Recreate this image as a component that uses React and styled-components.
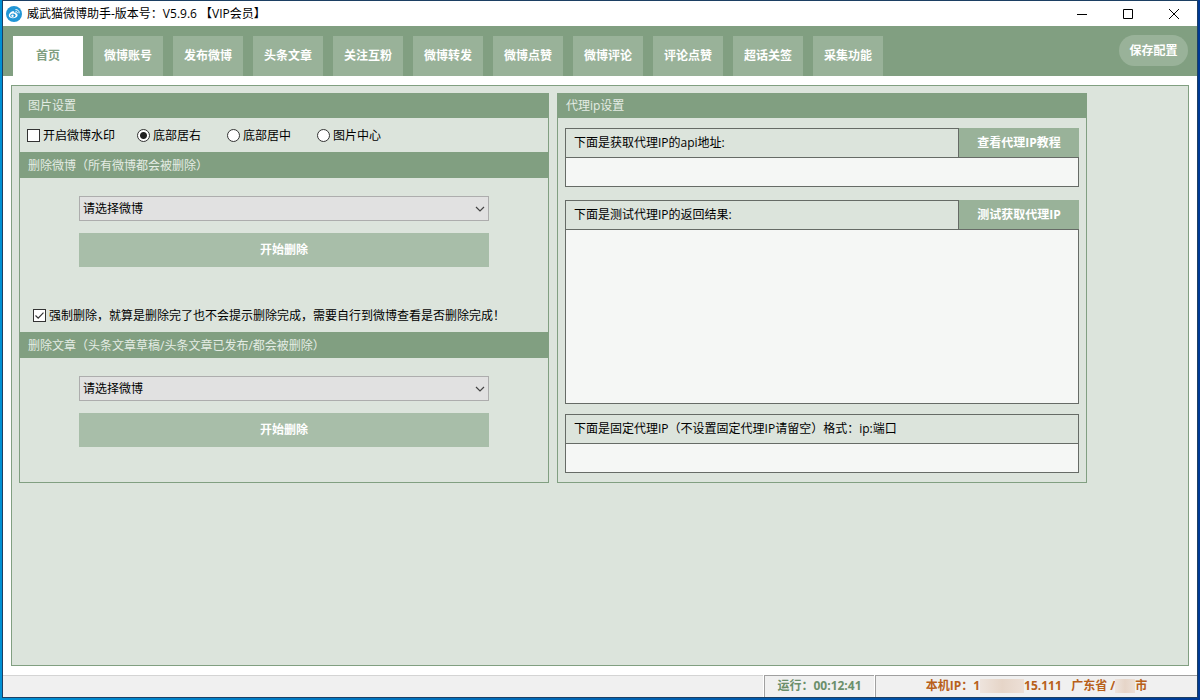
import React, {useState} from "react";
import styled, {createGlobalStyle} from "styled-components";

const tabs = ["首页", "微博账号", "发布微博", "头条文章", "关注互粉", "微博转发", "微博点赞", "微博评论", "评论点赞", "超话关签", "采集功能"];
const positions = ["底部居右", "底部居中", "图片中心"];

const Logo = () => (
    <svg width="16" height="16" viewBox="0 0 16 16" aria-hidden="true">
        <circle cx="8" cy="8" r="8" fill="#2196d6"/>
        <path d="M2.8 9.6C2.8 7.2 5.6 5.2 7.2 5.2c1 0 1.2.7 1 1.5 1.600-.6 2.600-.1 2.300 1.100 1 .3 1.300 1 1.100 1.800-.4 1.700-2.400 2.700-4.600 2.700-2.300 0-4.200-1-4.200-2.700z" fill="#fff"/>
        <ellipse cx="6.900" cy="9.500" rx="2.700" ry="1.900" fill="#2196d6"/>
        <circle cx="6.500" cy="9.700" r="1.200" fill="#fff"/>
        <path d="M9.400 3.700c2.400-.4 4.100 1.300 3.700 3.700M9.600 5.500c1.200-.2 1.900.6 1.700 1.700" fill="none" stroke="#fff" strokeWidth="1"/>
    </svg>
);

const DeleteForm = ({name}) => (
    <FormBody>
        <SelectBox>
            <Select aria-label={name}>
                <option>请选择微博</option>
            </Select>
            <Arrow width="10" height="6" viewBox="0 0 10 6" aria-hidden="true">
                <path d="M1 1l4 4 4-4" fill="none" stroke="#444" strokeWidth="1.200"/>
            </Arrow>
        </SelectBox>
        <DeleteButton type="button">开始删除</DeleteButton>
    </FormBody>
);

export default function App() {
    const [tab, setTab] = useState(0);
    const [mark, setMark] = useState(false);
    const [position, setPosition] = useState(0);
    const [force, setForce] = useState(true);

    return (
        <>
            <GlobalStyle/>
            <Window>
                <TitleBar>
                    <Logo/>
                    <Title>威武猫微博助手-版本号：V5.9.6 【VIP会员】</Title>
                    <WindowButton type="button" aria-label="最小化">
                        <svg width="10" height="10"><path d="M0 5.500h10" stroke="#000"/></svg>
                    </WindowButton>
                    <WindowButton type="button" aria-label="最大化">
                        <svg width="10" height="10"><path d="M.5.5h9v9h-9z" fill="none" stroke="#000"/></svg>
                    </WindowButton>
                    <WindowButton type="button" aria-label="关闭">
                        <svg width="10" height="10"><path d="M0 0l10 10M10 0L0 10" stroke="#000"/></svg>
                    </WindowButton>
                </TitleBar>
                <Toolbar>
                    <TabList>
                        {tabs.map((name, idx) => (
                            <Tab key={name} type="button" $active={tab === idx} onClick={() => setTab(idx)}>{name}</Tab>
                        ))}
                    </TabList>
                    <SaveButton type="button">保存配置</SaveButton>
                </Toolbar>
                <Content>
                    <Page>
                        <Card>
                            <CardTitle $height="24px">图片设置</CardTitle>
                            <OptionRow>
                                <Option $width="110px">
                                    <Check type="checkbox" checked={mark} onChange={() => setMark(!mark)}/>
                                    开启微博水印
                                </Option>
                                {positions.map((name, idx) => (
                                    <Option key={name} $width="90px">
                                        <Radio type="radio" name="position" checked={position === idx} onChange={() => setPosition(idx)}/>
                                        {name}
                                    </Option>
                                ))}
                            </OptionRow>
                            <CardTitle $height="26px">删除微博（所有微博都会被删除）</CardTitle>
                            <DeleteForm name="删除微博"/>
                            <ForceRow>
                                <Option>
                                    <Check type="checkbox" checked={force} onChange={() => setForce(!force)}/>
                                    强制删除，就算是删除完了也不会提示删除完成，需要自行到微博查看是否删除完成！
                                </Option>
                            </ForceRow>
                            <CardTitle $height="26px">删除文章（头条文章草稿/头条文章已发布/都会被删除）</CardTitle>
                            <DeleteForm name="删除文章"/>
                        </Card>
                        <Card>
                            <CardTitle $height="24px">代理ip设置</CardTitle>
                            <ProxyBody>
                                <Field $gap="13px">
                                    <FieldHead>
                                        <FieldLabel htmlFor="api">下面是获取代理IP的api地址:</FieldLabel>
                                        <FieldButton type="button">查看代理IP教程</FieldButton>
                                    </FieldHead>
                                    <Input id="api"/>
                                </Field>
                                <Field $gap="10px">
                                    <FieldHead>
                                        <FieldLabel htmlFor="result">下面是测试代理IP的返回结果:</FieldLabel>
                                        <FieldButton type="button">测试获取代理IP</FieldButton>
                                    </FieldHead>
                                    <TextArea id="result"/>
                                </Field>
                                <Field $gap="0">
                                    <FieldHead>
                                        <FieldLabel htmlFor="fixed">下面是固定代理IP（不设置固定代理IP请留空）格式：ip:端口</FieldLabel>
                                    </FieldHead>
                                    <Input id="fixed"/>
                                </Field>
                            </ProxyBody>
                        </Card>
                    </Page>
                </Content>
                <StatusBar>
                    <StatusCell/>
                    <StatusCell $width="110px" $color="#6b8f6b">运行：00:12:41</StatusCell>
                    <StatusCell $width="322px" $color="#b8601a">
                        本机IP：1<Mosaic $width="44px"/>15.111&nbsp;&nbsp; 广东省 /<Mosaic $width="20px"/>市
                    </StatusCell>
                </StatusBar>
            </Window>
        </>
    );
}

const GlobalStyle = createGlobalStyle`
  * {
    box-sizing: border-box;
  }
  body {
    margin: 0;
    background: linear-gradient(90deg, #0090d4, #003a94);
    font-family: 'Open Sans', 'Noto Sans CJK SC', sans-serif;
    font-size: 12px;
    line-height: 18px;
    color: #000;
  }
  button, input, select, textarea {
    margin: 0;
    padding: 0;
    border: 0;
    border-radius: 0;
    font: inherit;
    color: inherit;
  }
`
const Window = styled.div`
  display: flex;
  flex-direction: column;
  min-height: calc(100vh - 2px);
  margin: 0 2px 2px;
  border: 1px solid #1c3f63;
  background: #fff;
`
const TitleBar = styled.header`
  display: flex;
  align-items: center;
  height: 25px;
  padding-left: 3px;
`
const Title = styled.h1`
  flex: 1;
  margin: 0 0 0 5px;
  font-size: 12px;
  font-weight: 400;
`
const WindowButton = styled.button`
  display: flex;
  align-items: center;
  justify-content: center;
  width: 46px;
  height: 25px;
  background: none;
`
const Toolbar = styled.div`
  display: flex;
  justify-content: space-between;
  height: 50px;
  padding: 9px 9px 0 10px;
  background: #819f81;
`
const TabList = styled.nav`
  display: flex;
  align-items: flex-end;
  gap: 10px;
`
const Tab = styled.button`
  width: 70px;
  height: 40px;
  background: ${({$active}) => $active ? "#fff" : "#99b299"};
  color: ${({$active}) => $active ? "#819f81" : "#fff"};
  font-weight: 700;
`
const SaveButton = styled.button`
  width: 69px;
  height: 31px;
  border-radius: 16px;
  background: #99b299;
  color: #fff;
  font-weight: 700;
`
const Content = styled.main`
  display: flex;
  flex: 1;
  padding: 9px 8px;
`
const Page = styled.div`
  display: flex;
  flex: 1;
  align-items: flex-start;
  gap: 8px;
  padding: 7px;
  border: 1px solid #819f81;
  background: #dce4dc;
`
const Card = styled.section`
  flex: 0 1 530px;
  padding-bottom: 35px;
  border: 1px solid #819f81;
  &:last-child {
    padding-bottom: 0;
  }
`
const CardTitle = styled.h2`
  display: flex;
  align-items: flex-end;
  height: ${({$height}) => $height};
  margin: 0;
  padding: 0 8px 3px;
  background: #819f81;
  color: #e4ece4;
  font-size: 12px;
  font-weight: 400;
`
const OptionRow = styled.div`
  display: flex;
  align-items: center;
  height: 34px;
  padding: 2px 0 0 7px;
`
const Option = styled.label`
  display: flex;
  align-items: center;
  gap: 3px;
  width: ${({$width}) => $width || "auto"};
  white-space: nowrap;
`
const Check = styled.input`
  appearance: none;
  width: 13px;
  height: 13px;
  && {
    margin-bottom: 2px;
    border: 1px solid #333;
  }
  background: #fff;
  &:checked {
    background: #fff url("data:image/svg+xml,%3Csvg xmlns='http://www.w3.org/2000/svg' viewBox='0 0 11 11'%3E%3Cpath d='M1.500 5.500l2.700 2.700 5.300-5.500' fill='none' stroke='%23333' stroke-width='1.200'/%3E%3C/svg%3E");
  }
`
const Radio = styled(Check)`
  && {
    border-radius: 50%;
  }
  &:checked {
    background: radial-gradient(circle, #222 3px, #fff 4px);
  }
`
const FormBody = styled.div`
  display: flex;
  flex-direction: column;
  gap: 12px;
  padding: 18px 59px 0;
`
const SelectBox = styled.div`
  display: grid;
  align-items: center;
`
const Select = styled.select`
  grid-area: 1 / 1;
  appearance: none;
  height: 25px;
  padding: 0 3px;
  border: 1px solid #adadad;
  background: #e1e1e1;
`
const Arrow = styled.svg`
  grid-area: 1 / 1;
  justify-self: end;
  margin-right: 4px;
  pointer-events: none;
`
const DeleteButton = styled.button`
  height: 34px;
  background: #a8bea9;
  color: #fff;
  font-weight: 700;
`
const ForceRow = styled.div`
  display: flex;
  align-items: flex-end;
  height: 65px;
  padding: 0 0 7px 13px;
`
const ProxyBody = styled.div`
  padding: 10px 7px 9px;
`
const Field = styled.div`
  margin-bottom: ${({$gap}) => $gap};
`
const FieldHead = styled.div`
  display: flex;
  height: 29px;
`
const FieldLabel = styled.label`
  flex: 1;
  padding: 5px 8px;
  border: 1px solid #666b66;
  border-bottom: 0;
`
const FieldButton = styled.button`
  width: 120px;
  background: #99b299;
  color: #fff;
  font-weight: 700;
`
const Input = styled.input`
  display: block;
  width: 100%;
  height: 30px;
  padding: 0 8px;
  border: 1px solid #666b66;
  background: #f5f7f5;
`
const TextArea = styled.textarea`
  display: block;
  width: 100%;
  height: 175px;
  padding: 8px;
  border: 1px solid #666b66;
  background: #f5f7f5;
  resize: none;
`
const StatusBar = styled.footer`
  display: flex;
  gap: 1px;
  height: 22px;
  background: #fff;
`
const StatusCell = styled.div`
  display: flex;
  align-items: center;
  justify-content: center;
  flex: ${({$width}) => $width ? `0 0 ${$width}` : "1"};
  padding-bottom: 2px;
  border-top: 1px solid ${({$width}) => $width ? "#a0a0a0" : "#d4d4d4"};
  border-left: ${({$width}) => $width ? "1px solid #a0a0a0" : "0"};
  background: #f0f0f0;
  color: ${({$color}) => $color};
  font-weight: 700;
  white-space: pre;
`
const Mosaic = styled.span`
  width: ${({$width}) => $width};
  height: 14px;
  background: linear-gradient(90deg, #eee4dd, #e6d5c8, #ecdfd6);
`
